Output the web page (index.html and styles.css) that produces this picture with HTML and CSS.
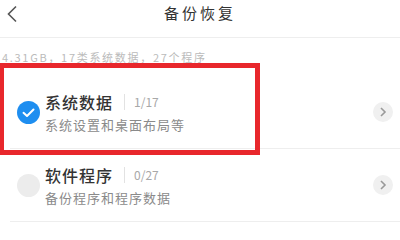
FILE: index.html
```html
<!DOCTYPE html>
<html lang="zh-CN">
<head>
  <meta charset="UTF-8">
  <meta name="viewport" content="width=device-width, initial-scale=1.0">
  <title>备份恢复</title>
  <link rel="stylesheet" href="styles.css">
</head>
<body>
  <div class="page">
    <div class="header">
      <a class="back" href="javascript:;">
        <svg width="12" height="18" viewBox="0 0 12 18"><path d="M10 1.5 L2.5 9 L10 16.5" fill="none" stroke="#555" stroke-width="1.6"/></svg>
      </a>
      <h2 class="title">备份恢复</h2>
      <span></span>
    </div>

    <p class="summary">4.31GB，17类系统数据，27个程序</p>

    <div class="row">
      <span class="check on">
        <svg width="23" height="23" viewBox="0 0 23 23"><path d="M6.5 11.8 L10 15 L16.5 8.5" fill="none" stroke="#fff" stroke-width="2" stroke-linecap="round" stroke-linejoin="round"/></svg>
      </span>
      <div class="info">
        <p class="name">系统数据<span class="count">1/17</span></p>
        <p class="desc">系统设置和桌面布局等</p>
      </div>
      <span class="more">
        <svg width="8" height="10" viewBox="0 0 8 10"><path d="M2 1 L6 5 L2 9" fill="none" stroke="#999" stroke-width="1.6"/></svg>
      </span>
    </div>

    <div class="row">
      <span class="check"></span>
      <div class="info">
        <p class="name">软件程序<span class="count">0/27</span></p>
        <p class="desc">备份程序和程序数据</p>
      </div>
      <span class="more">
        <svg width="8" height="10" viewBox="0 0 8 10"><path d="M2 1 L6 5 L2 9" fill="none" stroke="#999" stroke-width="1.6"/></svg>
      </span>
    </div>

    <!-- 标注框 -->
    <div class="mark"></div>
  </div>
</body>
</html>
```

FILE: styles.css
```css
html,
body {
      overflow: hidden;
}

body,
div,
h2,
p {
      margin: 0;
      padding: 0;
}

body {
      background: #fff;
      color: #333;
      font-family: "Noto Sans CJK SC", "Noto Sans", sans-serif;
}

.page {
      position: relative;
      width: 400px;
      height: 240px;
}

.header {
      display: grid;
      grid-template-columns: 40px 1fr 40px;
      align-items: start;
      height: 38px;
      padding-top: 4px;
      box-sizing: border-box;
      border-bottom: 1px solid #eee;
}

.back {
      display: block;
      padding-left: 6px;
      height: 18px;
}

.title {
      text-align: center;
      font-size: 15px;
      font-weight: normal;
      line-height: 18px;
      letter-spacing: 3px;
      color: #333;
}

.summary {
      height: 38px;
      line-height: 38px;
      padding-left: 2px;
      font-size: 11px;
      letter-spacing: 1.7px;
      color: #bbb;
}

.row {
      display: flex;
      align-items: center;
      height: 72px;
      margin-left: 10px;
      border-bottom: 1px solid #eee;
}

.check {
      width: 23px;
      height: 23px;
      margin-left: 7px;
      margin-right: 5px;
      border-radius: 50%;
      background: #ececec;
      flex-shrink: 0;
}

.check.on {
      background: #1e8ef0;
}

.check svg {
      display: block;
}

.info {
      display: flex;
      flex-direction: column;
      gap: 4px;
      margin-top: 2px;
}

.name {
      display: flex;
      align-items: center;
      font-size: 16px;
      line-height: 20px;
      font-weight: 500;
      letter-spacing: 1px;
      color: #333;
}

.count {
      margin-left: 11px;
      padding-left: 9px;
      border-left: 1px solid #e2e2e2;
      font-size: 12px;
      line-height: 16px;
      letter-spacing: 0;
      font-weight: normal;
      color: #a8a8a8;
}

.desc {
      font-size: 13px;
      line-height: 18px;
      letter-spacing: 1px;
      color: #8a8a8a;
}

.more {
      display: flex;
      align-items: center;
      justify-content: center;
      width: 20px;
      height: 20px;
      margin-left: auto;
      margin-right: 7px;
      border-radius: 50%;
      background: #f0f0f0;
}

.mark {
      position: absolute;
      left: -1px;
      top: 63px;
      width: 261px;
      height: 92px;
      box-sizing: border-box;
      border: 5px solid #e8272c;
}
```
